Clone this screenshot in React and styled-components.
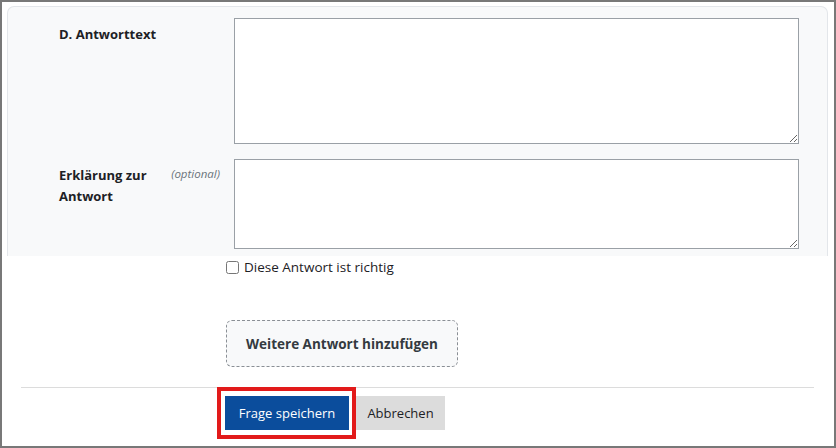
import React from 'react';
import styled, { createGlobalStyle } from 'styled-components';

const GlobalStyle = createGlobalStyle`
  html, body {
    margin: 0;
    padding: 0;
    background: #fff;
  }
  body {
    font-family: "Open Sans", "Noto Sans", sans-serif;
    color: #1d2125;
  }
`;

const Frame = styled.div`
  box-sizing: border-box;
  width: 836px;
  height: 448px;
  border: 2px solid #787878;
  padding: 4px 6px 0 5px;
  overflow: hidden;
  background: #fff;
`;

const Panel = styled.div`
  background: #f8f9fa;
  border: 1px solid #e3e6ea;
  border-bottom: none;
  border-radius: 7px 7px 0 0;
  padding: 11px 28px 7px 0;
  display: flex;
  flex-direction: column;
  gap: 15px;
`;

const Row = styled.div`
  display: grid;
  grid-template-columns: 226px 1fr;
`;

const LabelCell = styled.div`
  display: flex;
  justify-content: space-between;
  align-items: flex-start;
  padding: 6px 14px 0 51px;
`;

const Label = styled.label`
  width: 100px;
  font-size: 13px;
  font-weight: 700;
  line-height: 21px;
  color: #1d2125;
`;

const Optional = styled.span`
  font-size: 11.5px;
  font-style: italic;
  color: #6a737b;
  line-height: 16px;
  margin-top: 1px;
`;

const Area = styled.textarea`
  box-sizing: border-box;
  display: block;
  width: 100%;
  height: ${(p) => p.$h}px;
  border: 1px solid #9aa0a6;
  border-radius: 0;
  background: #fff;
  margin: 0;
  font: inherit;
`;

const Indented = styled.div`
  padding-left: 219px;
`;

const CheckRow = styled.label`
  display: flex;
  align-items: center;
  gap: 5px;
  margin-top: 1px;
  font-size: 13.5px;
  line-height: 20px;
  color: #1d2125;
`;

const Check = styled.input`
  width: 13px;
  height: 13px;
  margin: 0;
`;

const AddButton = styled.button`
  box-sizing: border-box;
  margin-top: 43px;
  width: 232px;
  height: 47px;
  background: #f8f9fa;
  border: 1px dashed #8a8f95;
  border-radius: 6px;
  font-family: inherit;
  font-size: 13.5px;
  font-weight: 700;
  color: #343a40;
`;

const Divider = styled.hr`
  margin: 20px 14px 0 14px;
  border: none;
  border-top: 1px solid #dcdcdc;
`;

const Footer = styled.div`
  display: flex;
  align-items: center;
  padding-left: 210px;
  margin-top: -1px;
`;

const Highlight = styled.div`
  border: 4px solid #e21a1a;
  padding: 5px 3px 5px 4px;
  display: flex;
`;

const Btn = styled.button`
  box-sizing: border-box;
  height: 34px;
  padding: 0 8px;
  border: none;
  border-radius: 0;
  white-space: nowrap;
  font-family: inherit;
  font-size: 13px;
  background: ${(p) => (p.$primary ? '#0b4d9c' : '#dcdcdc')};
  color: ${(p) => (p.$primary ? '#fff' : '#1d2125')};
`;

export default function App() {
  return (
    <>
      <GlobalStyle />
      <Frame>
        <Panel>
          <Row>
            <LabelCell>
              <Label>D. Antworttext</Label>
            </LabelCell>
            <Area $h={126} />
          </Row>
          <Row>
            <LabelCell>
              <Label>Erklärung zur Antwort</Label>
              <Optional>(optional)</Optional>
            </LabelCell>
            <Area $h={90} />
          </Row>
        </Panel>
        <Indented>
          <CheckRow>
            <Check type="checkbox" />
            Diese Antwort ist richtig
          </CheckRow>
          <AddButton>Weitere Antwort hinzufügen</AddButton>
        </Indented>
        <Divider />
        <Footer>
          <Highlight>
            <Btn $primary style={{ width: 124 }}>Frage speichern</Btn>
          </Highlight>
          <Btn style={{ width: 89 }}>Abbrechen</Btn>
        </Footer>
      </Frame>
    </>
  );
}
